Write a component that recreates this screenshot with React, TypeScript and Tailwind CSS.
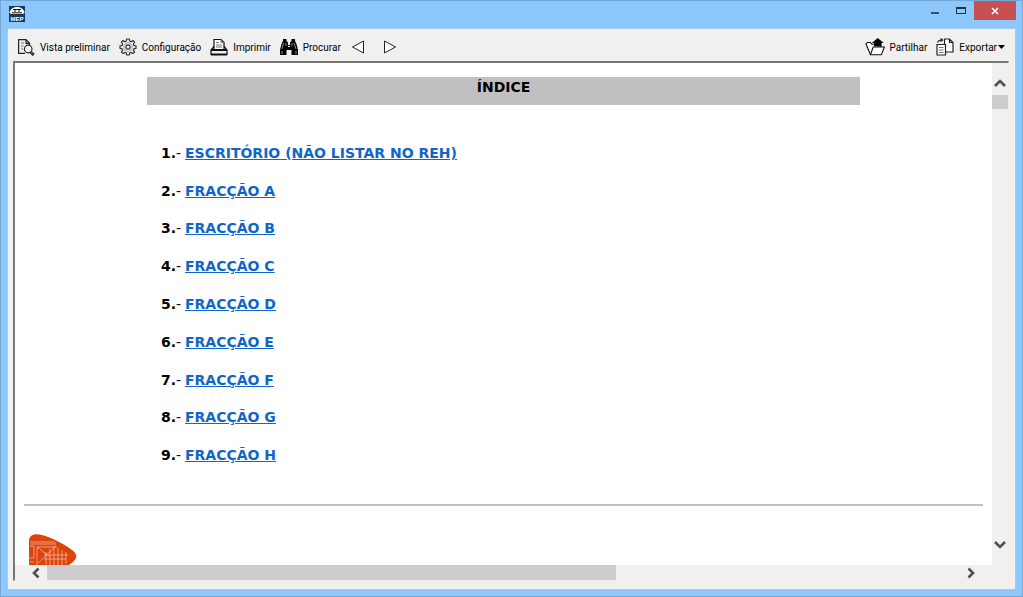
import type { ReactElement, ReactNode } from "react";

const ENTRIES = [
  "ESCRITÓRIO (NÃO LISTAR NO REH)",
  "FRACÇÃO A",
  "FRACÇÃO B",
  "FRACÇÃO C",
  "FRACÇÃO D",
  "FRACÇÃO E",
  "FRACÇÃO F",
  "FRACÇÃO G",
  "FRACÇÃO H",
];

function AppIcon() {
  return (
    <svg width="16" height="16" viewBox="0 0 16 16" aria-hidden="true">
      <rect width="16" height="16" fill="#0d3b70" />
      <path d="M0 6.500C1 3 4 0.500 8 0.500s7 2.500 8 6l-2 2H2z" fill="#fff" stroke="#111" strokeWidth="0.800" />
      <path d="M4 3.500h8M6 3v3M10 3v3M3 6.800h10" stroke="#111" strokeWidth="1" fill="none" />
      <text x="8" y="15" textAnchor="middle" fontSize="6" fontWeight="700" fill="#fff" fontFamily="Liberation Sans, sans-serif">
        MEP
      </text>
    </svg>
  );
}

function PreviewIcon() {
  return (
    <svg width="18" height="18" viewBox="0 0 18 18" fill="none" stroke="#222" strokeWidth="1.200" aria-hidden="true">
      <path d="M8 15.400H1.600V1.600h7.400l3.500 3.500v2M9 1.600v3.800h3.500" />
      <path d="M4 5h3M4 8h2.500M4 11h2" stroke="#777" />
      <circle cx="11.200" cy="11" r="3.800" fill="#f4f4f4" />
      <path d="M14 13.500l2.800 2.300-1.100 1.400-2.800-2.700" fill="#fff" />
    </svg>
  );
}

function GearIcon() {
  return (
    <svg width="18" height="18" viewBox="0 0 18 18" fill="none" stroke="#333" aria-hidden="true">
      <path
        d="M7.700 1h2.600l.5 2.200 1.300.6 1.900-1.200 1.600 1.600-1.200 1.900.6 1.300 2 .5v2.400l-2 .5-.6 1.300 1.200 1.900-1.600 1.600-1.900-1.200-1.300.6-.5 2H7.700l-.5-2-1.300-.6L4 15.600 2.400 14l1.200-1.900-.6-1.300-2-.5V7.900l2-.5.6-1.300-1.200-1.900L4 2.600l1.900 1.200 1.300-.6z"
        strokeWidth="1.200"
      />
      <circle cx="9" cy="9" r="4.300" stroke="#888" strokeWidth="0.800" />
      <circle cx="9" cy="9" r="2.100" strokeWidth="1.200" />
    </svg>
  );
}

function PrinterIcon() {
  return (
    <svg width="18" height="18" viewBox="0 0 18 18" fill="none" stroke="#111" strokeWidth="1.200" aria-hidden="true">
      <path d="M4 11V1.500h7l3 3V11" fill="#fff" />
      <path d="M11 1.500v3h3M6 4.500h3M6 7h6M6 9h6" stroke="#777" strokeWidth="1" />
      <path d="M4 8.500L1 12v4.500h16V12l-3-3.500" />
      <path d="M1 12h16" strokeWidth="2" />
      <path d="M1 16.500h16" strokeWidth="2" />
    </svg>
  );
}

function BinocularsIcon() {
  return (
    <svg width="20" height="18" viewBox="0 0 20 18" fill="#000" aria-hidden="true">
      <path d="M4 1h3.500v2L9 4.500V7h2V4.500L12.500 3V1H16v2l1.500 3L19 12v5h-6.500v-5H7.500v5H1v-5l1.500-6L4 3z" />
      <path d="M4.500 5L3 11M15 5l2 6M7 5v3M13 5v3M3 13v3M17 13v3" stroke="#c8c8c8" strokeWidth="0.700" />
      <path d="M9 8.500h2" stroke="#fff" />
    </svg>
  );
}

function ShareIcon() {
  return (
    <svg width="22" height="20" viewBox="0 0 22 20" fill="none" stroke="#111" strokeWidth="1.200" aria-hidden="true">
      <path d="M6 18.500L1 6.500L2.500 5h3.500L7.500 7h10v3" fill="#fff" />
      <path d="M6 18.500L9 10h12.400l-3.400 8.500z" fill="#fff" />
      <path d="M14 0L7.500 5.500H10V9.500h8V5.500h2.500z" fill="#000" stroke="none" />
    </svg>
  );
}

function ExportIcon() {
  return (
    <svg width="18" height="18" viewBox="0 0 18 18" fill="none" stroke="#222" strokeWidth="1.200" aria-hidden="true">
      <path d="M8.500 1h5l3.500 3.500V14H8.500zM13.500 1v3.500H17" fill="#fff" />
      <path d="M1 6.500h8.500V17H1z" fill="#fff" />
      <path d="M3 9.500h4.500M3 12h4.500M3 14.500h4.500" stroke="#777" />
      <path d="M1.500 4.500C2 2.500 3.500 2 6 2M4.500 0.500L6.500 2l-2 1.500" />
    </svg>
  );
}

function Logo() {
  return (
    <svg width="50" height="31" viewBox="0 0 50 31" className="block" aria-hidden="true">
      <path d="M1 31V7C1 1 6-1 14 1c11 3 22 9 30 15 7 5 5 10-3 15z" fill="#dc440c" />
      <g stroke="#f6b59c" strokeWidth="0.800" fill="none">
        <path d="M2 8h25M3 10h25M2 12h4v12M9 13v18M9 13h20M1 24h5M2 28h4" />
        <path d="M18 18v12M22 15v16M26 12v19M30 14v17M34 16v15M38 18v12" />
        <path d="M9 13l13 10M10 29l18-17M16 21h24M16 25h22" />
      </g>
    </svg>
  );
}

const ARROWS = {
  up: "M2 10l5-5 5 5",
  down: "M2 4l5 5 5-5",
  left: "M9.500 2.500L5 7l4.500 4.500",
  right: "M4.500 2.500L9 7l-4.500 4.500",
};

function ScrollArrow({ dir }: { dir: keyof typeof ARROWS }) {
  return (
    <svg width="14" height="14" viewBox="0 0 14 14" fill="none" stroke="#505050" strokeWidth="2.600" className="block" aria-hidden="true">
      <path d={ARROWS[dir]} />
    </svg>
  );
}

function ToolButton({ Icon, children }: { Icon: () => ReactElement; children: ReactNode }) {
  return (
    <button type="button" className="flex items-center gap-1 whitespace-nowrap">
      <span className="flex w-5 justify-center">
        <Icon />
      </span>
      <span className="flex items-center">{children}</span>
    </button>
  );
}

export default function App() {
  return (
    <div className="flex h-screen flex-col border border-[#73a7d4] bg-[#8cc8fb] px-[6px] pb-[6px] font-['Roboto',sans-serif] text-[10px] text-black">
      <header className="flex h-[27px] shrink-0 items-start justify-between pl-[2px]">
        <div className="pt-[5px]">
          <AppIcon />
        </div>
        <div className="flex h-[19px]">
          <button type="button" aria-label="Minimizar" className="flex w-[26px] items-center justify-center pt-1">
            <span className="h-[2px] w-2 bg-[#35536e]" />
          </button>
          <button type="button" aria-label="Maximizar" className="flex w-[26px] items-center justify-center">
            <span className="h-[7px] w-[10px] border border-t-2 border-[#1f3344]" />
          </button>
          <button type="button" aria-label="Fechar" className="flex w-[42px] items-center justify-center bg-[#c75050]">
            <svg width="8" height="8" viewBox="0 0 8 8" stroke="#fff" strokeWidth="1.600">
              <path d="M1 1l6 6M7 1L1 7" />
            </svg>
          </button>
        </div>
      </header>

      <div className="flex min-h-0 flex-1 flex-col border border-[#a5c9e6] bg-[#f0f0f0] pr-[6px] pb-2 pl-[5px]">
        <div role="toolbar" className="flex h-8 shrink-0 items-center justify-between pt-1 pr-1 pl-[3px]">
          <div className="flex items-center gap-2">
            <ToolButton Icon={PreviewIcon}>Vista preliminar</ToolButton>
            <ToolButton Icon={GearIcon}>Configuração</ToolButton>
            <ToolButton Icon={PrinterIcon}>Imprimir</ToolButton>
            <ToolButton Icon={BinocularsIcon}>Procurar</ToolButton>
            <div className="flex items-center gap-[18px] pl-[2px]">
              <button type="button" aria-label="Anterior">
                <svg width="14" height="14" viewBox="0 0 14 14" fill="#fff" stroke="#222" className="block">
                  <path d="M12.500 1v12L1.500 7z" />
                </svg>
              </button>
              <button type="button" aria-label="Seguinte">
                <svg width="14" height="14" viewBox="0 0 14 14" fill="#fff" stroke="#222" className="block">
                  <path d="M1.500 1v12l11-6z" />
                </svg>
              </button>
            </div>
          </div>
          <div className="flex items-center gap-2">
            <ToolButton Icon={ShareIcon}>Partilhar</ToolButton>
            <ToolButton Icon={ExportIcon}>
              Exportar
              <svg width="7" height="4" viewBox="0 0 7 4" className="ml-px">
                <path d="M0 0h7L3.500 4z" />
              </svg>
            </ToolButton>
          </div>
        </div>

        <div className="flex min-h-0 flex-1 flex-col border-t-2 border-r border-b border-l-2 border-t-[#777] border-r-[#f6e9df] border-b-[#f6e9df] border-l-[#777]">
          <div className="flex min-h-0 flex-1">
            <main className="min-w-0 flex-1 overflow-hidden bg-white px-[9px] pt-[14px] font-['DejaVu_Sans',sans-serif] text-[14px] leading-5 font-bold">
              <div className="mx-auto max-w-[713px]">
                <h1 className="h-7 bg-[#c0c0c0] text-center">ÍNDICE</h1>
                <ol className="mt-[29px] grid h-[340px] items-center pl-[14px]">
                  {ENTRIES.map((entry, i) => (
                    <li key={entry} className="flex">
                      <span className="w-6">
                        {i + 1}.<span className="font-normal">-</span>
                      </span>
                      <a href="#" className="text-[#0f66c8] underline">
                        {entry}
                      </a>
                    </li>
                  ))}
                </ol>
              </div>
              <hr className="mt-[30px] mb-7 border-t-2 border-[#c0c0c0]" />
              <div className="pl-1">
                <Logo />
              </div>
            </main>

            <div className="flex w-4 shrink-0 flex-col items-center justify-between bg-[#f0f0f0] py-[13px]">
              <div className="flex w-full flex-col items-center gap-[5px]">
                <ScrollArrow dir="up" />
                <div className="h-[14px] w-full bg-[#cdcdcd]" />
              </div>
              <ScrollArrow dir="down" />
            </div>
          </div>

          <div className="flex h-[15px] shrink-0 items-center pr-4">
            <span className="flex w-8 justify-end pr-1">
              <ScrollArrow dir="left" />
            </span>
            <div className="flex h-full flex-1">
              <div className="h-full w-[62%] bg-[#cdcdcd]" />
            </div>
            <span className="flex w-7 justify-start">
              <ScrollArrow dir="right" />
            </span>
          </div>
        </div>
      </div>
    </div>
  );
}
